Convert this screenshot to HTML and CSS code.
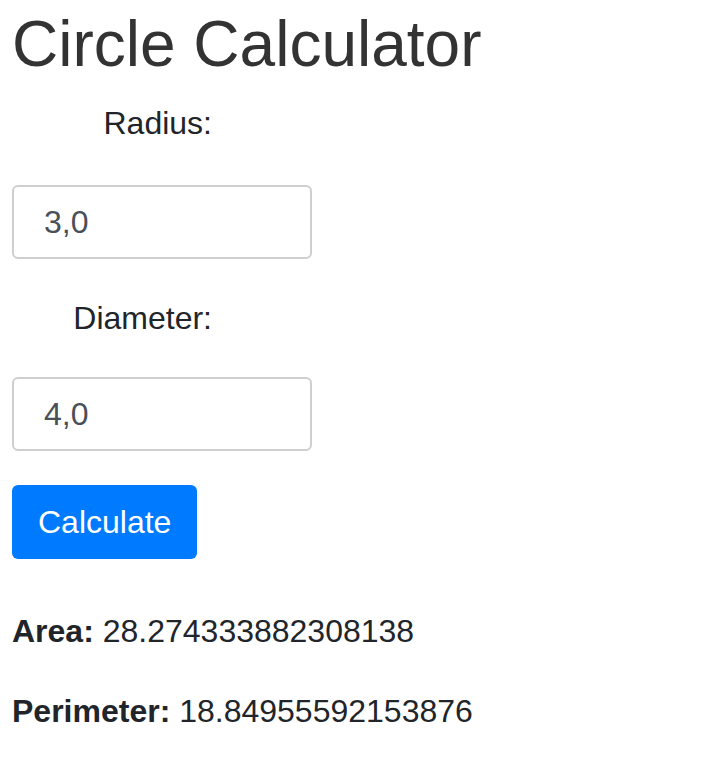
FILE: index.html
```html
<!DOCTYPE html>
<html lang="en">
<head>
<meta charset="utf-8">
<title>Circle Calculator</title>
<link rel="stylesheet" href="styles.css">
</head>
<body>
<div class="page">
  <h1 class="title">Circle Calculator</h1>
  <div class="field field-radius">
    <label class="field-label" for="radius">Radius:</label>
    <input class="field-input" id="radius" type="text" value="3,0">
  </div>
  <div class="field field-diameter">
    <label class="field-label" for="diameter">Diameter:</label>
    <input class="field-input" id="diameter" type="text" value="4,0">
  </div>
  <button class="btn-calc" type="button">Calculate</button>
  <p class="result result-area"><strong>Area:</strong> 28.274333882308138</p>
  <p class="result result-perimeter"><strong>Perimeter:</strong> 18.84955592153876</p>
</div>
</body>
</html>
```

FILE: styles.css
```css
html, body {
  margin: 0;
  padding: 0;
  background: #ffffff;
}

body {
  font-family: "Liberation Sans", Arial, sans-serif;
  font-size: 32px;
  color: #212529;
}

.page {
  padding: 0 12px;
}

.title {
  margin: 6px 0 0;
  font-size: 64px;
  font-weight: 400;
  line-height: 77px;
  color: #333333;
}

.field {
  display: flex;
  flex-direction: column;
  align-items: flex-start;
}

.field-radius {
  margin-top: 16px;
}

.field-diameter {
  margin-top: 35px;
}

.field-label {
  display: block;
  width: 200px;
  text-align: right;
  line-height: 48px;
  height: 48px;
}

.field-radius .field-input {
  margin-top: 38px;
}

.field-diameter .field-input {
  margin-top: 35px;
}

.field-input {
  box-sizing: border-box;
  width: 300px;
  height: 74px;
  margin: 0;
  padding: 0 30px;
  border: 2px solid #cfcfcf;
  border-radius: 6px;
  font-family: "Liberation Sans", Arial, sans-serif;
  font-size: 32px;
  color: #495057;
  background: #ffffff;
  outline: none;
}

.btn-calc {
  display: block;
  box-sizing: border-box;
  margin: 34px 0 0;
  height: 74px;
  padding: 0 26px;
  border: 0;
  border-radius: 6px;
  background: #007bff;
  color: #ffffff;
  font-family: "Liberation Sans", Arial, sans-serif;
  font-size: 32px;
  line-height: 74px;
}

.result {
  margin: 0;
  line-height: 48px;
}

.result-area {
  margin-top: 48px;
}

.result-perimeter {
  margin-top: 32px;
}

.result strong {
  font-weight: 700;
}
```
